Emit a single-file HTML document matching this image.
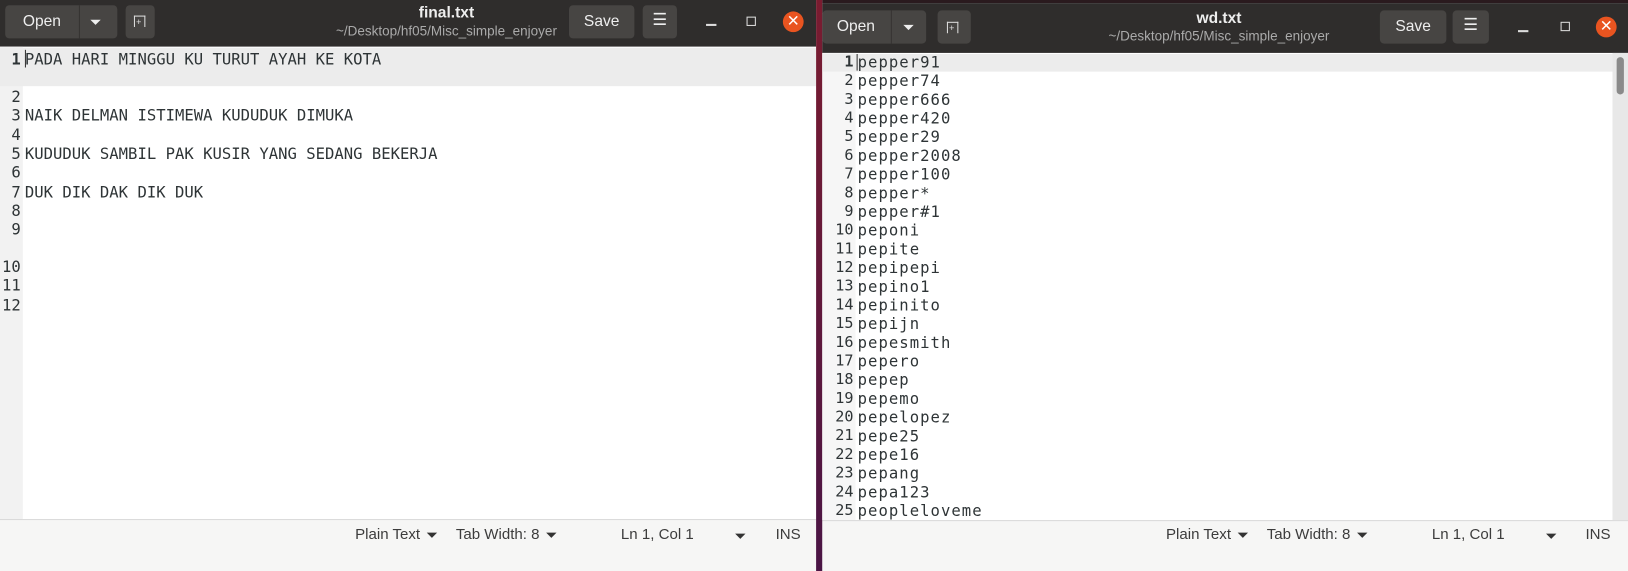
<!DOCTYPE html>
<html><head><meta charset="utf-8"><style>
*{margin:0;padding:0;box-sizing:border-box}
html,body{width:1628px;height:550px;overflow:hidden;background:#f6f6f5}
#w{position:absolute;left:0;top:0;width:1568px;height:530px;transform:scale(1.0383);transform-origin:0 0;font-family:"Liberation Sans",sans-serif}
.abs{position:absolute}
.hdr{background:#2f2d2c;}
.btn{position:absolute;background:#474543;border-radius:4px;color:#eee;font-size:15px;text-align:center}
.mono{font-family:"DejaVu Sans Mono","Liberation Mono",monospace;color:#2e3436;white-space:pre}
.ln{position:absolute;font-family:"DejaVu Sans Mono","Liberation Mono",monospace;color:#2e3436;text-align:right}
.st{position:absolute;font-size:14.5px;color:#3c3c3c}
.tri{display:inline-block;width:0;height:0;border-left:5px solid transparent;border-right:5px solid transparent;border-top:5px solid #333;vertical-align:middle;margin-left:6px}
.title{position:absolute;color:#eee;text-align:center}
.x{position:absolute;width:20px;height:20px;border-radius:50%;background:#e95420;color:#fff;font-size:15px;text-align:center;line-height:20px}
</style></head><body><div id="w">

<!-- LEFT WINDOW -->
<div class="abs hdr" style="left:0;top:0;width:786px;height:45px"></div>
<div class="btn" style="left:5px;top:5px;width:108px;height:32px"></div>
<div class="abs" style="left:76px;top:5px;width:1px;height:32px;background:#363432"></div>
<div class="abs" style="left:22px;top:12px;color:#eee;font-size:15px">Open</div>
<div class="abs" style="left:87px;top:19px;width:0;height:0;border-left:5px solid transparent;border-right:5px solid transparent;border-top:5px solid #eee"></div>
<div class="btn" style="left:121px;top:5px;width:28px;height:32px"></div>
<div class="abs" style="left:129px;top:15px;width:11px;height:11px;border:1.5px solid #ddd;border-bottom:none"></div>
<div class="abs" style="left:131px;top:16px;color:#ddd;font-size:9px">+</div>
<div class="title" style="left:280px;top:4px;width:300px;font-weight:bold;font-size:15px">final.txt</div>
<div class="title" style="left:240px;top:22px;width:380px;font-size:13px;color:#aaa">~/Desktop/hf05/Misc_simple_enjoyer</div>
<div class="btn" style="left:548px;top:5px;width:63px;height:32px;line-height:32px">Save</div>
<div class="btn" style="left:619px;top:5px;width:33px;height:32px;line-height:30px;font-size:16px">☰</div>
<div class="abs" style="left:680px;top:23px;width:10px;height:1.5px;background:#ddd"></div>
<div class="abs" style="left:719px;top:16px;width:9px;height:9px;border:1.5px solid #ddd"></div>
<div class="x" style="left:754px;top:11px">✕</div>

<div class="abs" style="left:0;top:45px;width:786px;height:455px;background:#fff"></div>
<div class="abs" style="left:0;top:45px;width:22px;height:455px;background:#f2f2f2"></div>
<div class="abs" style="left:0;top:46px;width:786px;height:37px;background:#ececec"></div>
<div class="abs" style="left:24px;top:48px;width:1px;height:17px;background:#333"></div>
<div class="abs" style="left:0;top:2px">
<div class="ln" style="left:0;top:46px;width:20px;font-size:15px;font-weight:bold">1</div>
<div class="ln" style="left:0;top:82px;width:20px;font-size:15px">2</div>
<div class="ln" style="left:0;top:100px;width:20px;font-size:15px">3</div>
<div class="ln" style="left:0;top:119px;width:20px;font-size:15px">4</div>
<div class="ln" style="left:0;top:137px;width:20px;font-size:15px">5</div>
<div class="ln" style="left:0;top:155px;width:20px;font-size:15px">6</div>
<div class="ln" style="left:0;top:174px;width:20px;font-size:15px">7</div>
<div class="ln" style="left:0;top:192px;width:20px;font-size:15px">8</div>
<div class="ln" style="left:0;top:210px;width:20px;font-size:15px">9</div>
<div class="ln" style="left:0;top:246px;width:20px;font-size:15px">10</div>
<div class="ln" style="left:0;top:264px;width:20px;font-size:15px">11</div>
<div class="ln" style="left:0;top:283px;width:20px;font-size:15px">12</div>
<div class="abs mono" style="left:24px;top:46px;font-size:15px">PADA HARI MINGGU KU TURUT AYAH KE KOTA</div>
<div class="abs mono" style="left:24px;top:100px;font-size:15px">NAIK DELMAN ISTIMEWA KUDUDUK DIMUKA</div>
<div class="abs mono" style="left:24px;top:137px;font-size:15px">KUDUDUK SAMBIL PAK KUSIR YANG SEDANG BEKERJA</div>
<div class="abs mono" style="left:24px;top:174px;font-size:15px">DUK DIK DAK DIK DUK</div>
</div>
<div class="abs" style="left:0;top:500px;width:786px;height:1px;background:#d6d6d6"></div>
<div class="abs" style="left:0;top:501px;width:786px;height:49px;background:#f6f6f5"></div>
<div class="st" style="left:342px;top:507px">Plain Text<span class="tri"></span></div>
<div class="st" style="left:439px;top:507px">Tab Width: 8<span class="tri"></span></div>
<div class="st" style="left:598px;top:507px">Ln 1, Col 1</div>
<div class="abs" style="left:708px;top:514px;width:0;height:0;border-left:5px solid transparent;border-right:5px solid transparent;border-top:5px solid #333"></div>
<div class="st" style="left:747px;top:507px">INS</div>

<!-- DIVIDER -->
<div class="abs" style="left:786px;top:0;width:6px;height:550px;background:linear-gradient(#7a1c30,#4a1545)"></div>

<!-- RIGHT WINDOW -->
<div class="abs" style="left:792px;top:0;width:836px;height:3px;background:#2a1a1e"></div>
<div class="abs hdr" style="left:792px;top:3px;width:836px;height:48px"></div>
<div class="abs" style="left:792px;top:10px;width:100px;height:32px;background:#474543;border-radius:4px"></div>
<div class="abs" style="left:858px;top:10px;width:1px;height:32px;background:#363432"></div>
<div class="abs" style="left:806px;top:17px;color:#eee;font-size:15px">Open</div>
<div class="abs" style="left:870px;top:24px;width:0;height:0;border-left:5px solid transparent;border-right:5px solid transparent;border-top:5px solid #eee"></div>
<div class="btn" style="left:903px;top:10px;width:32px;height:32px"></div>
<div class="abs" style="left:912px;top:21px;width:11px;height:11px;border:1.5px solid #ddd;border-bottom:none"></div>
<div class="abs" style="left:914px;top:22px;color:#ddd;font-size:9px">+</div>
<div class="title" style="left:1024px;top:9px;width:300px;font-weight:bold;font-size:15px">wd.txt</div>
<div class="title" style="left:984px;top:27px;width:380px;font-size:13px;color:#aaa">~/Desktop/hf05/Misc_simple_enjoyer</div>
<div class="btn" style="left:1329px;top:10px;width:64px;height:32px;line-height:32px">Save</div>
<div class="btn" style="left:1399px;top:10px;width:35px;height:32px;line-height:30px;font-size:16px">☰</div>
<div class="abs" style="left:1462px;top:29px;width:10px;height:1.5px;background:#ddd"></div>
<div class="abs" style="left:1503px;top:21px;width:9px;height:9px;border:1.5px solid #ddd"></div>
<div class="x" style="left:1537px;top:16px">✕</div>

<div class="abs" style="left:792px;top:51px;width:776px;height:450px;background:#fff"></div>
<div class="abs" style="left:792px;top:51px;width:32px;height:450px;background:#f6f6f6"></div>
<div class="abs" style="left:792px;top:52px;width:764px;height:17px;background:#ececec"></div>
<div class="abs" style="left:1553px;top:51px;width:15px;height:450px;background:#e8e8e8"></div>
<div class="abs" style="left:1557px;top:55px;width:7px;height:36px;background:#8a8a8a;border-radius:4px"></div>
<div class="abs" style="left:825px;top:52px;width:1px;height:16px;background:#333"></div>
<div class="abs" style="left:792px;top:51px;font-family:'DejaVu Sans Mono',monospace;font-size:14.6px;line-height:18px;color:#2e3436">
<div class="ln" style="position:static;width:30px;float:left;white-space:pre;line-height:18px"><b>1</b>
2
3
4
5
6
7
8
9
10
11
12
13
14
15
16
17
18
19
20
21
22
23
24
25</div>
<div class="mono" style="margin-left:34px;line-height:18px;font-size:15px;letter-spacing:1px">pepper91
pepper74
pepper666
pepper420
pepper29
pepper2008
pepper100
pepper*
pepper#1
peponi
pepite
pepipepi
pepino1
pepinito
pepijn
pepesmith
pepero
pepep
pepemo
pepelopez
pepe25
pepe16
pepang
pepa123
peopleloveme</div>
</div>
<div class="abs" style="left:792px;top:501px;width:776px;height:1px;background:#d6d6d6"></div>
<div class="abs" style="left:792px;top:502px;width:776px;height:48px;background:#f6f6f5"></div>
<div class="st" style="left:1123px;top:507px">Plain Text<span class="tri"></span></div>
<div class="st" style="left:1220px;top:507px">Tab Width: 8<span class="tri"></span></div>
<div class="st" style="left:1379px;top:507px">Ln 1, Col 1</div>
<div class="abs" style="left:1489px;top:514px;width:0;height:0;border-left:5px solid transparent;border-right:5px solid transparent;border-top:5px solid #333"></div>
<div class="st" style="left:1527px;top:507px">INS</div>
</div></body></html>
